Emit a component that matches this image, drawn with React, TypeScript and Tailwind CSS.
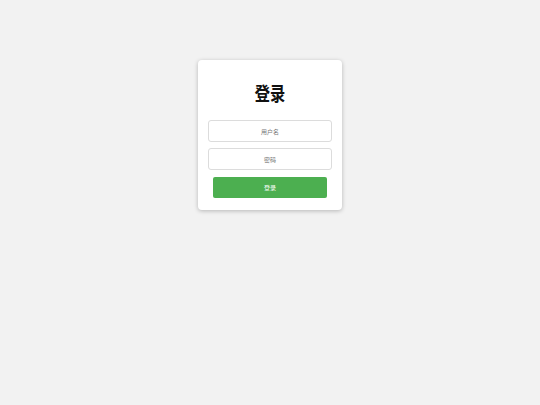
export default function App() {
  return (
    <div
      className="min-h-screen w-full bg-[#f2f2f2] pt-[60px]"
      style={{ fontFamily: '"Noto Sans CJK SC", "Noto Sans", sans-serif' }}
    >
      <div className="mx-auto flex w-[144px] flex-col items-center rounded bg-white px-[10px] pb-[12px] pt-[18px] shadow-[0_1px_4px_rgba(0,0,0,0.25)]">
        <h1 className="inline-block scale-x-[0.8] text-[19px] font-bold leading-[30px] text-[#111]">登录</h1>
        <input
          type="text"
          placeholder="用户名"
          className="mt-[12px] h-[22px] w-[124px] rounded-[3px] border border-[#dcdcdc] text-center text-[6px] text-[#333] outline-none placeholder:text-[#777]"
        />
        <input
          type="password"
          placeholder="密码"
          className="mt-[6px] h-[22px] w-[124px] rounded-[3px] border border-[#dcdcdc] text-center text-[6px] text-[#333] outline-none placeholder:text-[#777]"
        />
        <button className="mt-[7px] h-[21px] w-[114px] rounded-[2px] bg-[#4caf50] text-[6px] text-white">
          登录
        </button>
      </div>
    </div>
  );
}
